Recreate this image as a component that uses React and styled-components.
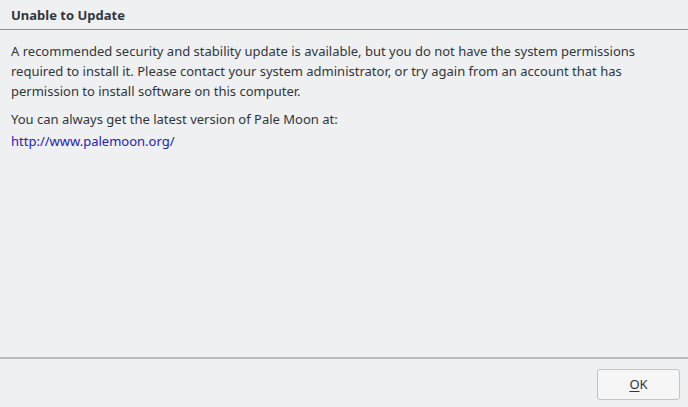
import React from "react";
import styled, { createGlobalStyle } from "styled-components";

const GlobalStyle = createGlobalStyle`
  html, body {
    margin: 0;
    padding: 0;
    background: #eff0f1;
  }
  #root {
    height: 407px;
  }
`;

const Dialog = styled.div`
  height: 407px;
  display: flex;
  flex-direction: column;
  background: #eff0f1;
  font-family: "Noto Sans", "Open Sans", sans-serif;
  font-size: 13px;
  color: #31363b;
`;

const Header = styled.div`
  height: 29px;
  display: flex;
  align-items: center;
  padding: 0 11px;
  border-bottom: 1px solid #8d8f91;
  font-weight: bold;
`;

const Body = styled.div`
  flex: 1;
  padding: 11px 11px 0;
  border-bottom: 2px solid #bababa;
`;

const Para = styled.p`
  margin: 0 0 ${(p) => p.gap || 8}px;
  line-height: 20px;
`;

const Link = styled.a`
  color: #2323b4;
  text-decoration: none;
  line-height: 20px;
`;

const Footer = styled.div`
  height: 48px;
  display: flex;
  justify-content: flex-end;
  align-items: center;
  padding: 0 8px 0 0;
`;

const Button = styled.button`
  width: 83px;
  height: 31px;
  background: #f6f6f7;
  border: 1px solid #c3c4c6;
  border-radius: 3px;
  font-family: inherit;
  font-size: 13px;
  color: #31363b;
  margin-top: 2px;
  u {
    text-underline-offset: 2px;
  }
`;

export default function App() {
  return (
    <>
      <GlobalStyle />
      <Dialog>
        <Header>Unable to Update</Header>
        <Body>
          <Para>
            A recommended security and stability update is available, but you do not have the system permissions
            required to install it. Please contact your system administrator, or try again from an account that has
            permission to install software on this computer.
          </Para>
          <Para gap={2}>You can always get the latest version of Pale Moon at:</Para>
          <Link href="#">http://www.palemoon.org/</Link>
        </Body>
        <Footer>
          <Button>
            <u>O</u>K
          </Button>
        </Footer>
      </Dialog>
    </>
  );
}
